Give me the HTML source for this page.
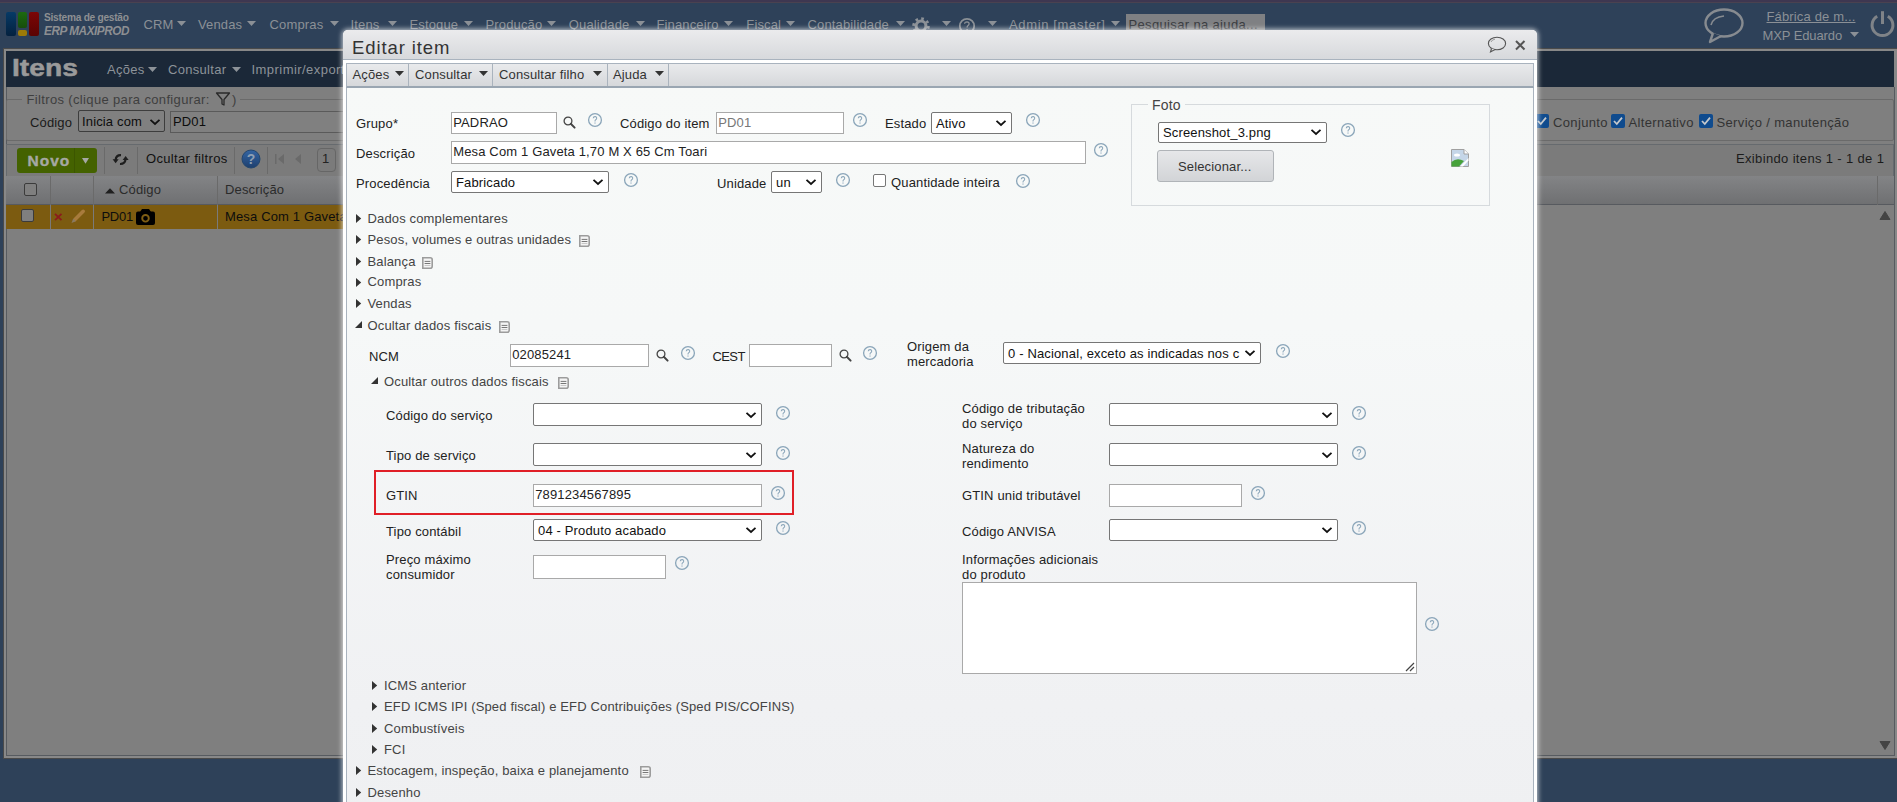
<!DOCTYPE html>
<html><head><meta charset="utf-8"><title>Editar item</title>
<style>
html,body{margin:0;padding:0;}
body{width:1897px;height:802px;overflow:hidden;position:relative;background:#2e4159;font-family:"Liberation Sans", sans-serif;}
.a{position:absolute;white-space:nowrap;}
svg.a{overflow:visible;}
</style></head><body>

<div class="a" style="left:0px;top:0px;width:1897px;height:3px;background:#3e3751;border-bottom:1px solid #4a4250;box-sizing:border-box;"></div>
<div class="a" style="left:6px;top:12px;width:9.5px;height:24px;background:linear-gradient(#063a66,#04213f);border-radius:2px;"></div>
<div class="a" style="left:17.5px;top:12px;width:9.5px;height:15.5px;background:linear-gradient(#1d6a10,#174d0c);border-radius:2px;"></div>
<div class="a" style="left:17.5px;top:29.5px;width:9.5px;height:6.5px;background:#9c7a08;border-radius:2px;"></div>
<div class="a" style="left:29px;top:12px;width:9.5px;height:24px;background:linear-gradient(#7c0606,#5a0303);border-radius:2px;"></div>
<div class="a" style="left:44px;top:9.70px;font-size:11px;line-height:14px;color:#8d8f92;font-weight:bold;letter-spacing:-0.3px;transform:scaleX(0.925);transform-origin:0 0;">Sistema de gestão</div>
<div class="a" style="left:44px;top:21.74px;font-size:13.5px;line-height:17px;color:#8d8f92;font-weight:bold;letter-spacing:-0.5px;font-style:italic;transform:scaleX(0.87);transform-origin:0 0;">ERP MAXIPROD</div>
<div class="a" style="left:143.5px;top:16.73px;font-size:13px;line-height:16px;color:#8b9096;font-weight:normal;letter-spacing:0.15px;">CRM</div>
<div class="a" style="left:198px;top:16.73px;font-size:13px;line-height:16px;color:#8b9096;font-weight:normal;letter-spacing:0.15px;">Vendas</div>
<div class="a" style="left:269.5px;top:16.73px;font-size:13px;line-height:16px;color:#8b9096;font-weight:normal;letter-spacing:0.15px;">Compras</div>
<div class="a" style="left:350.5px;top:16.73px;font-size:13px;line-height:16px;color:#8b9096;font-weight:normal;letter-spacing:0.15px;">Itens</div>
<div class="a" style="left:409.5px;top:16.73px;font-size:13px;line-height:16px;color:#8b9096;font-weight:normal;letter-spacing:0.15px;">Estoque</div>
<div class="a" style="left:485.5px;top:16.73px;font-size:13px;line-height:16px;color:#8b9096;font-weight:normal;letter-spacing:0.15px;">Produção</div>
<div class="a" style="left:568.8px;top:16.73px;font-size:13px;line-height:16px;color:#8b9096;font-weight:normal;letter-spacing:0.15px;">Qualidade</div>
<div class="a" style="left:656.4px;top:16.73px;font-size:13px;line-height:16px;color:#8b9096;font-weight:normal;letter-spacing:0.15px;">Financeiro</div>
<div class="a" style="left:746.3px;top:16.73px;font-size:13px;line-height:16px;color:#8b9096;font-weight:normal;letter-spacing:0.15px;">Fiscal</div>
<div class="a" style="left:807.5px;top:16.73px;font-size:13px;line-height:16px;color:#8b9096;font-weight:normal;letter-spacing:0.15px;">Contabilidade</div>
<svg class="a" style="left:176.5px;top:21px;" width="9" height="5" viewBox="0 0 9 5"><path d="M0 0 H9 L4.5 5 Z" fill="#8b9096"/></svg>
<svg class="a" style="left:247.2px;top:21px;" width="9" height="5" viewBox="0 0 9 5"><path d="M0 0 H9 L4.5 5 Z" fill="#8b9096"/></svg>
<svg class="a" style="left:329.5px;top:21px;" width="9" height="5" viewBox="0 0 9 5"><path d="M0 0 H9 L4.5 5 Z" fill="#8b9096"/></svg>
<svg class="a" style="left:388.1px;top:21px;" width="9" height="5" viewBox="0 0 9 5"><path d="M0 0 H9 L4.5 5 Z" fill="#8b9096"/></svg>
<svg class="a" style="left:463.5px;top:21px;" width="9" height="5" viewBox="0 0 9 5"><path d="M0 0 H9 L4.5 5 Z" fill="#8b9096"/></svg>
<svg class="a" style="left:546.9px;top:21px;" width="9" height="5" viewBox="0 0 9 5"><path d="M0 0 H9 L4.5 5 Z" fill="#8b9096"/></svg>
<svg class="a" style="left:635.5px;top:21px;" width="9" height="5" viewBox="0 0 9 5"><path d="M0 0 H9 L4.5 5 Z" fill="#8b9096"/></svg>
<svg class="a" style="left:724.2px;top:21px;" width="9" height="5" viewBox="0 0 9 5"><path d="M0 0 H9 L4.5 5 Z" fill="#8b9096"/></svg>
<svg class="a" style="left:785.5px;top:21px;" width="9" height="5" viewBox="0 0 9 5"><path d="M0 0 H9 L4.5 5 Z" fill="#8b9096"/></svg>
<svg class="a" style="left:895.5px;top:21px;" width="9" height="5" viewBox="0 0 9 5"><path d="M0 0 H9 L4.5 5 Z" fill="#8b9096"/></svg>
<svg class="a" style="left:941.5px;top:21px;" width="9" height="5" viewBox="0 0 9 5"><path d="M0 0 H9 L4.5 5 Z" fill="#8b9096"/></svg>
<svg class="a" style="left:987.5px;top:21px;" width="9" height="5" viewBox="0 0 9 5"><path d="M0 0 H9 L4.5 5 Z" fill="#8b9096"/></svg>
<svg class="a" style="left:1110.5px;top:21px;" width="9" height="5" viewBox="0 0 9 5"><path d="M0 0 H9 L4.5 5 Z" fill="#8b9096"/></svg>
<svg class="a" style="left:911px;top:15.5px;" width="20" height="20" viewBox="0 0 20 20"><circle cx="10" cy="10" r="7.3" fill="none" stroke="#8b9096" stroke-width="3" stroke-dasharray="2.6 3.13"/><circle cx="10" cy="10" r="4.9" fill="none" stroke="#8b9096" stroke-width="3"/></svg>
<svg class="a" style="left:958px;top:16.5px;" width="18" height="18" viewBox="0 0 18 18"><circle cx="9" cy="9" r="7.2" fill="none" stroke="#8b9096" stroke-width="1.8"/><path d="M6.6 6.8 Q6.7 4.9 9 4.9 Q11.2 5 11.1 6.9 Q11 8 9.8 8.7 Q9.1 9.2 9.1 10.6" fill="none" stroke="#8b9096" stroke-width="1.3"/><rect x="8.4" y="12" width="1.4" height="1.4" fill="#8b9096"/></svg>
<div class="a" style="left:1009px;top:16.73px;font-size:13px;line-height:16px;color:#8b9096;font-weight:normal;letter-spacing:0.65px;">Admin [master]</div>
<div class="a" style="left:1126px;top:14px;width:139px;height:21px;background:#7f8083;"></div>
<div class="a" style="left:1128.5px;top:16.73px;font-size:13px;line-height:16px;color:#383a3e;font-weight:normal;letter-spacing:0.35px;">Pesquisar na ajuda...</div>
<svg class="a" style="left:1704px;top:8px;" width="41" height="36" viewBox="0 0 41 36"><ellipse cx="20" cy="15" rx="18.5" ry="13.5" fill="none" stroke="#878b90" stroke-width="2.4"/><path d="M9 25 L6 34 L17 28" fill="#2e4159" stroke="#878b90" stroke-width="2.4" stroke-linejoin="round"/><path d="M7 17 Q9 9 20 8" fill="none" stroke="#878b90" stroke-width="1.6"/></svg>
<div class="a" style="left:1766.5px;top:8.73px;font-size:13px;line-height:16px;color:#8b9096;font-weight:normal;letter-spacing:0.15px;text-decoration:underline;">Fábrica de m...</div>
<div class="a" style="left:1762.5px;top:27.83px;font-size:13px;line-height:16px;color:#8b9096;font-weight:normal;letter-spacing:-0.1px;">MXP Eduardo</div>
<svg class="a" style="left:1850px;top:32px;" width="9" height="5" viewBox="0 0 9 5"><path d="M0 0 H9 L4.5 5 Z" fill="#8b9096"/></svg>
<svg class="a" style="left:1869px;top:9px;" width="28" height="29" viewBox="0 0 28 29"><path d="M8.2 7.2 A10.4 10.4 0 1 0 18.8 7.2" fill="none" stroke="#7f8388" stroke-width="3"/><path d="M13.5 2.2 V15" stroke="#7f8388" stroke-width="3"/></svg>
<div class="a" style="left:3px;top:48px;width:1897px;height:711px;background:#888;border:1px solid #4a4a4a;box-sizing:border-box;"></div>
<div class="a" style="left:6px;top:87px;width:1889px;height:669px;background:#7f7f7f;border-left:1px solid #575b60;border-right:1px solid #575b60;border-bottom:1px solid #575b60;box-sizing:border-box;"></div>
<div class="a" style="left:6px;top:51px;width:1888px;height:36px;background:#1b2838;"></div>
<div class="a" style="left:12px;top:54.42px;font-size:23.5px;line-height:29px;color:#9a9a9a;font-weight:bold;letter-spacing:0px;transform:scaleX(1.2);transform-origin:0 0;-webkit-text-stroke:0.5px #9a9a9a;">Itens</div>
<div class="a" style="left:107px;top:61.73px;font-size:13px;line-height:16px;color:#8d9399;font-weight:normal;letter-spacing:0.3px;">Ações</div>
<svg class="a" style="left:148px;top:67px;" width="9" height="5" viewBox="0 0 9 5"><path d="M0 0 H9 L4.5 5 Z" fill="#8d9399"/></svg>
<div class="a" style="left:168px;top:61.73px;font-size:13px;line-height:16px;color:#8d9399;font-weight:normal;letter-spacing:0.3px;">Consultar</div>
<svg class="a" style="left:232px;top:67px;" width="9" height="5" viewBox="0 0 9 5"><path d="M0 0 H9 L4.5 5 Z" fill="#8d9399"/></svg>
<div class="a" style="left:251.5px;top:61.73px;font-size:13px;line-height:16px;color:#8d9399;font-weight:normal;letter-spacing:0.45px;">Imprimir/exportar</div>
<div class="a" style="left:6px;top:99px;width:1888px;height:42px;border:1px solid #6a6a6a;border-radius:2px;box-sizing:border-box;"></div>
<div class="a" style="left:22px;top:92px;width:218px;height:14px;background:#7f7f7f;"></div>
<div class="a" style="left:26.5px;top:91.73px;font-size:13px;line-height:16px;color:#3e3e3e;font-weight:normal;letter-spacing:0.35px;">Filtros (clique para configurar:</div>
<svg class="a" style="left:215px;top:91px;" width="16" height="16" viewBox="0 0 16 16"><path d="M1.5 2 H14.5 L9 8.5 V14 L7 13 V8.5 Z" fill="none" stroke="#2a2a2a" stroke-width="1.3" stroke-linejoin="round"/></svg>
<div class="a" style="left:232px;top:91.73px;font-size:13px;line-height:16px;color:#3e3e3e;font-weight:normal;letter-spacing:0.15px;">)</div>
<div class="a" style="left:30px;top:114.53px;font-size:13px;line-height:16px;color:#1a1a1a;font-weight:normal;letter-spacing:0.15px;">Código</div>
<div class="a" style="left:77.5px;top:110.3px;width:87.0px;height:22.200000000000003px;background:#808080;border:1px solid #3d3d3d;border-radius:2px;box-sizing:border-box;"></div>
<div class="a" style="left:82px;top:113.73px;font-size:13px;line-height:16px;color:#0d0d0d;font-weight:normal;letter-spacing:0.15px;">Inicia com</div>
<svg class="a" style="left:148.5px;top:117.5px;" width="12" height="8" viewBox="0 0 12 8"><path d="M1.5 1.8 L6 6 L10.5 1.8" fill="none" stroke="#111" stroke-width="1.8"/></svg>
<div class="a" style="left:170px;top:111px;width:175px;height:22px;background:#808080;border:1px solid #5a5a5a;box-sizing:border-box;"></div>
<div class="a" style="left:173px;top:113.73px;font-size:13px;line-height:16px;color:#0d0d0d;font-weight:normal;letter-spacing:0.15px;">PD01</div>
<div class="a" style="left:1535px;top:114px;width:14px;height:14px;background:#0f4b8e;border-radius:2px;"></div>
<svg class="a" style="left:1535px;top:114px;" width="14" height="14" viewBox="0 0 14 14"><path d="M3 7 L5.8 10 L11 3.6" fill="none" stroke="#c4c8cc" stroke-width="1.8"/></svg>
<div class="a" style="left:1553px;top:114.73px;font-size:13px;line-height:16px;color:#333;font-weight:normal;letter-spacing:0.35px;">Conjunto</div>
<div class="a" style="left:1610.5px;top:114px;width:14.0px;height:14px;background:#0f4b8e;border-radius:2px;"></div>
<svg class="a" style="left:1610.5px;top:114px;" width="14" height="14" viewBox="0 0 14 14"><path d="M3 7 L5.8 10 L11 3.6" fill="none" stroke="#c4c8cc" stroke-width="1.8"/></svg>
<div class="a" style="left:1628.5px;top:114.73px;font-size:13px;line-height:16px;color:#333;font-weight:normal;letter-spacing:0.35px;">Alternativo</div>
<div class="a" style="left:1698.5px;top:114px;width:14.0px;height:14px;background:#0f4b8e;border-radius:2px;"></div>
<svg class="a" style="left:1698.5px;top:114px;" width="14" height="14" viewBox="0 0 14 14"><path d="M3 7 L5.8 10 L11 3.6" fill="none" stroke="#c4c8cc" stroke-width="1.8"/></svg>
<div class="a" style="left:1716.5px;top:114.73px;font-size:13px;line-height:16px;color:#333;font-weight:normal;letter-spacing:0.35px;">Serviço / manutenção</div>
<div class="a" style="left:6px;top:144px;width:1888px;height:33px;background:#7b7b7b;border:1px solid #666a6e;box-sizing:border-box;"></div>
<div class="a" style="left:17px;top:148px;width:80px;height:25px;background:#446200;border-radius:3px;"></div>
<div class="a" style="left:74px;top:148px;width:1px;height:25px;background:#3c5600;"></div>
<div class="a" style="left:27.5px;top:151.38px;font-size:15.5px;line-height:19px;color:#a6a8a4;font-weight:bold;letter-spacing:1.0px;-webkit-text-stroke:0.4px #a6a8a4;">Novo</div>
<svg class="a" style="left:82px;top:158px;" width="7" height="6" viewBox="0 0 7 6"><path d="M0 0 H7 L3.5 5.8 Z" fill="#a6a8a4"/></svg>
<div class="a" style="left:104px;top:147px;width:1px;height:27px;background:#6a6a6a;"></div>
<div class="a" style="left:137px;top:147px;width:1px;height:27px;background:#6a6a6a;"></div>
<div class="a" style="left:234px;top:147px;width:1px;height:27px;background:#6a6a6a;"></div>
<div class="a" style="left:267px;top:147px;width:1px;height:27px;background:#6a6a6a;"></div>
<svg class="a" style="left:112px;top:152px;" width="18" height="15" viewBox="0 0 18 15"><path d="M9 3.2 Q4 3 3.6 8" fill="none" stroke="#1e1e1e" stroke-width="2.2"/><path d="M0.6 7.2 L6.6 7.2 L3.6 11.2 Z" fill="#1e1e1e"/><path d="M8 12 Q13 12.2 13.6 7.2" fill="none" stroke="#1e1e1e" stroke-width="2.2"/><path d="M10.6 8 L16.6 8 L13.6 4 Z" fill="#1e1e1e"/></svg>
<div class="a" style="left:146px;top:150.73px;font-size:13px;line-height:16px;color:#111;font-weight:normal;letter-spacing:0.33px;">Ocultar filtros</div>
<svg class="a" style="left:241px;top:149px;" width="20" height="20" viewBox="0 0 20 20"><defs><linearGradient id="hb" x1="0" y1="0" x2="0" y2="1"><stop offset="0" stop-color="#3565a3"/><stop offset="1" stop-color="#1d3f6e"/></linearGradient></defs><circle cx="10" cy="10" r="9" fill="url(#hb)"/><circle cx="10" cy="10" r="9" fill="none" stroke="#24476f" stroke-width="1"/><text x="10" y="15" font-size="14" font-weight="bold" text-anchor="middle" fill="#8e9fb3" font-family="Liberation Sans">?</text></svg>
<svg class="a" style="left:275px;top:154px;" width="10" height="10" viewBox="0 0 10 10"><rect x="0" y="0" width="1.5" height="10" fill="#6a6a6a"/><path d="M9 0 V10 L3 5 Z" fill="#6a6a6a"/></svg>
<svg class="a" style="left:295px;top:154px;" width="7" height="10" viewBox="0 0 7 10"><path d="M6 0 V10 L0 5 Z" fill="#6a6a6a"/></svg>
<div class="a" style="left:317px;top:148px;width:19px;height:24px;border:1px solid #666;border-radius:4px;box-sizing:border-box;"></div>
<div class="a" style="left:322px;top:151.23px;font-size:13px;line-height:16px;color:#222;font-weight:normal;letter-spacing:0.15px;">1</div>
<div class="a" style="left:1736px;top:150.73px;font-size:13px;line-height:16px;color:#1b1b1b;font-weight:normal;letter-spacing:0.35px;">Exibindo itens 1 - 1 de 1</div>
<div class="a" style="left:6px;top:176px;width:1888px;height:29px;background:linear-gradient(#838486,#6f7072);border-bottom:1px solid #575a5f;box-sizing:border-box;"></div>
<div class="a" style="left:50px;top:176px;width:1px;height:29px;background:#6a6a6a;"></div>
<div class="a" style="left:93px;top:176px;width:1px;height:29px;background:#6a6a6a;"></div>
<div class="a" style="left:217px;top:176px;width:1px;height:29px;background:#6a6a6a;"></div>
<div class="a" style="left:1877px;top:176px;width:1px;height:29px;background:#6a6a6a;"></div>
<div class="a" style="left:24px;top:183px;width:13px;height:13px;background:#7f7f7f;border:1px solid #3b3b3b;border-radius:2px;box-sizing:border-box;"></div>
<svg class="a" style="left:105px;top:188px;" width="10" height="5.5" viewBox="0 0 10 5.5"><path d="M0 5.5 H10 L5 0.3 Z" fill="#1f1f1f"/></svg>
<div class="a" style="left:119px;top:181.73px;font-size:13px;line-height:16px;color:#2b2b2b;font-weight:normal;letter-spacing:0.15px;">Código</div>
<div class="a" style="left:225px;top:181.73px;font-size:13px;line-height:16px;color:#2b2b2b;font-weight:normal;letter-spacing:0.15px;">Descrição</div>
<div class="a" style="left:6px;top:205px;width:339px;height:24px;background:#7c5b10;"></div>
<div class="a" style="left:50px;top:205px;width:1px;height:24px;background:#7a7a7a;"></div>
<div class="a" style="left:93px;top:205px;width:1px;height:24px;background:#7a7a7a;"></div>
<div class="a" style="left:217px;top:205px;width:1px;height:24px;background:#7a7a7a;"></div>
<div class="a" style="left:21px;top:209px;width:13px;height:13px;background:#7f7f7f;border:1px solid #3b3b3b;border-radius:2px;box-sizing:border-box;"></div>
<svg class="a" style="left:54px;top:213px;" width="9" height="8" viewBox="0 0 9 8"><path d="M1 0.8 L7.5 7.2 M7.5 0.8 L1 7.2" stroke="#8a1c1c" stroke-width="1.8"/></svg>
<svg class="a" style="left:70px;top:208px;" width="16" height="16" viewBox="0 0 16 16"><path d="M5 11.5 L13.2 3.3" stroke="#a87b3c" stroke-width="3.6" stroke-linecap="round"/><path d="M1.5 15 L3.2 10.6 L5.9 13.3 Z" fill="#8a7a62"/></svg>
<div class="a" style="left:101.5px;top:208.73px;font-size:13px;line-height:16px;color:#0d0d0d;font-weight:normal;letter-spacing:-0.3px;">PD01</div>
<svg class="a" style="left:136px;top:208px;" width="19" height="18" viewBox="0 0 19 18"><rect x="0" y="3.5" width="19" height="13.5" rx="2" fill="#000"/><path d="M4 4 L6 1 H13 L15 4 Z" fill="#000"/><circle cx="9.5" cy="10.3" r="3.3" fill="none" stroke="#7f5e14" stroke-width="1.9"/></svg>
<div class="a" style="left:225px;top:208.73px;font-size:13px;line-height:16px;color:#0d0d0d;font-weight:normal;letter-spacing:0.15px;">Mesa Com 1 Gaveta</div>
<svg class="a" style="left:1878.5px;top:211px;" width="12" height="9" viewBox="0 0 12 9"><path d="M1 8.5 H11 L6 0.5 Z" fill="#444" stroke="#444" stroke-width="1" stroke-linejoin="round"/></svg>
<svg class="a" style="left:1878.5px;top:741px;" width="12" height="9" viewBox="0 0 12 9"><path d="M1 0.5 H11 L6 8.5 Z" fill="#444" stroke="#444" stroke-width="1" stroke-linejoin="round"/></svg>
<div class="a" style="left:0px;top:759px;width:1897px;height:43px;background:#2e4159;"></div>
<div class="a" style="left:343px;top:30px;width:1194px;height:790px;background:#fff;border-radius:5px 5px 0 0;box-shadow:0 0 5px 1px rgba(255,255,255,0.72);"></div>
<div class="a" style="left:343px;top:30px;width:1194px;height:30px;background:linear-gradient(#ebebed,#d7d9dc);border-radius:5px 5px 0 0;border-bottom:1px solid #a9b3be;box-sizing:border-box;"></div>
<div class="a" style="left:352px;top:36.03px;font-size:18.5px;line-height:23px;color:#333;font-weight:normal;letter-spacing:0.9px;">Editar item</div>
<svg class="a" style="left:1487px;top:36px;" width="20" height="17" viewBox="0 0 20 17"><ellipse cx="10" cy="7.5" rx="8.6" ry="6.3" fill="none" stroke="#555" stroke-width="1.1"/><path d="M4.5 12.5 L3.5 16 L8 13.6" fill="#e0e1e3" stroke="#555" stroke-width="1.1"/><path d="M4 6 Q5 3.5 8 3.2" fill="none" stroke="#888" stroke-width="0.8"/></svg>
<svg class="a" style="left:1514px;top:39px;" width="12" height="12" viewBox="0 0 12 12"><path d="M2 2 L10.5 10.5 M10.5 2 L2 10.5" stroke="#555" stroke-width="2"/></svg>
<div class="a" style="left:346px;top:63px;width:1188px;height:757px;background:linear-gradient(#f7f9f8 0%,#f6f8f8 35%,#f0f1f3 85%,#eff0f2 100%);border:1px solid #a9b3be;box-sizing:border-box;"></div>
<div class="a" style="left:346px;top:63px;width:1188px;height:25px;background:linear-gradient(#e9eaec,#d6d8db);border:1px solid #a9b3be;border-bottom:2px solid #9aa6b2;box-sizing:border-box;"></div>
<div class="a" style="left:352.5px;top:66.73px;font-size:13px;line-height:16px;color:#333;font-weight:normal;letter-spacing:0.15px;">Ações</div>
<svg class="a" style="left:394.5px;top:71px;" width="9" height="5" viewBox="0 0 9 5"><path d="M0 0 H9 L4.5 5 Z" fill="#333"/></svg>
<div class="a" style="left:407.8px;top:64px;width:1.0px;height:22px;background:#aab3bd;"></div>
<div class="a" style="left:415px;top:66.73px;font-size:13px;line-height:16px;color:#333;font-weight:normal;letter-spacing:0.15px;">Consultar</div>
<svg class="a" style="left:479.0px;top:71px;" width="9" height="5" viewBox="0 0 9 5"><path d="M0 0 H9 L4.5 5 Z" fill="#333"/></svg>
<div class="a" style="left:491.6px;top:64px;width:1.0px;height:22px;background:#aab3bd;"></div>
<div class="a" style="left:499px;top:66.73px;font-size:13px;line-height:16px;color:#333;font-weight:normal;letter-spacing:0.15px;">Consultar filho</div>
<svg class="a" style="left:593.3px;top:71px;" width="9" height="5" viewBox="0 0 9 5"><path d="M0 0 H9 L4.5 5 Z" fill="#333"/></svg>
<div class="a" style="left:607.2px;top:64px;width:1.0px;height:22px;background:#aab3bd;"></div>
<div class="a" style="left:613px;top:66.73px;font-size:13px;line-height:16px;color:#333;font-weight:normal;letter-spacing:0.15px;">Ajuda</div>
<svg class="a" style="left:654.5px;top:71px;" width="9" height="5" viewBox="0 0 9 5"><path d="M0 0 H9 L4.5 5 Z" fill="#333"/></svg>
<div class="a" style="left:667.8px;top:64px;width:1.0px;height:22px;background:#aab3bd;"></div>
<div class="a" style="left:356px;top:115.73px;font-size:13px;line-height:16px;color:#222;font-weight:normal;letter-spacing:0.15px;">Grupo*</div>
<div class="a" style="left:451px;top:112px;width:106px;height:22px;background:#fff;border:1px solid #a9a9a9;box-sizing:border-box;"></div>
<div class="a" style="left:453.2px;top:114.63px;font-size:13px;line-height:16px;color:#222;font-weight:normal;letter-spacing:0.15px;">PADRAO</div>
<svg class="a" style="left:561.5px;top:115.3px;" width="14" height="14" viewBox="0 0 14 14"><circle cx="6" cy="6" r="3.9" fill="none" stroke="#444" stroke-width="1.3"/><path d="M8.8 8.8 L12.6 12.6" stroke="#444" stroke-width="2" stroke-linecap="round"/></svg>
<svg class="a" style="left:587px;top:112px;" width="16" height="16" viewBox="0 0 16 16"><circle cx="8" cy="8" r="6.4" fill="none" stroke="#8aa5b9" stroke-width="1.3"/><path d="M6.2 6.2 Q6.3 4.6 8.1 4.6 Q9.8 4.7 9.7 6.2 Q9.6 7.2 8.5 7.9 Q8 8.3 8 9.4" fill="none" stroke="#8aa5b9" stroke-width="1.05"/><rect x="7.45" y="10.5" width="1.1" height="1.1" fill="#8aa5b9"/></svg>
<div class="a" style="left:620px;top:115.73px;font-size:13px;line-height:16px;color:#222;font-weight:normal;letter-spacing:0.15px;">Código do item</div>
<div class="a" style="left:716px;top:112px;width:128px;height:22px;background:#fff;border:1px solid #a9a9a9;box-sizing:border-box;"></div>
<div class="a" style="left:718.2px;top:114.63px;font-size:13px;line-height:16px;color:#777;font-weight:normal;letter-spacing:0.15px;">PD01</div>
<svg class="a" style="left:851.5px;top:112px;" width="16" height="16" viewBox="0 0 16 16"><circle cx="8" cy="8" r="6.4" fill="none" stroke="#8aa5b9" stroke-width="1.3"/><path d="M6.2 6.2 Q6.3 4.6 8.1 4.6 Q9.8 4.7 9.7 6.2 Q9.6 7.2 8.5 7.9 Q8 8.3 8 9.4" fill="none" stroke="#8aa5b9" stroke-width="1.05"/><rect x="7.45" y="10.5" width="1.1" height="1.1" fill="#8aa5b9"/></svg>
<div class="a" style="left:885px;top:115.73px;font-size:13px;line-height:16px;color:#222;font-weight:normal;letter-spacing:0.15px;">Estado</div>
<div class="a" style="left:931px;top:111.5px;width:81px;height:22.0px;background:#fff;border:1px solid #767676;border-radius:2px;box-sizing:border-box;"></div>
<div class="a" style="left:936px;top:115.63px;font-size:13px;line-height:16px;color:#111;font-weight:normal;letter-spacing:0.15px;">Ativo</div>
<svg class="a" style="left:995px;top:118.5px;" width="12" height="8" viewBox="0 0 12 8"><path d="M1.5 1.8 L6 6 L10.5 1.8" fill="none" stroke="#111" stroke-width="1.8"/></svg>
<svg class="a" style="left:1025px;top:112px;" width="16" height="16" viewBox="0 0 16 16"><circle cx="8" cy="8" r="6.4" fill="none" stroke="#8aa5b9" stroke-width="1.3"/><path d="M6.2 6.2 Q6.3 4.6 8.1 4.6 Q9.8 4.7 9.7 6.2 Q9.6 7.2 8.5 7.9 Q8 8.3 8 9.4" fill="none" stroke="#8aa5b9" stroke-width="1.05"/><rect x="7.45" y="10.5" width="1.1" height="1.1" fill="#8aa5b9"/></svg>
<div class="a" style="left:356px;top:145.73px;font-size:13px;line-height:16px;color:#222;font-weight:normal;letter-spacing:0.15px;">Descrição</div>
<div class="a" style="left:451px;top:141px;width:635px;height:22.5px;background:#fff;border:1px solid #a9a9a9;box-sizing:border-box;"></div>
<div class="a" style="left:453.2px;top:143.88px;font-size:13px;line-height:16px;color:#222;font-weight:normal;letter-spacing:0.15px;">Mesa Com 1 Gaveta 1,70 M X 65 Cm Toari</div>
<svg class="a" style="left:1093px;top:142px;" width="16" height="16" viewBox="0 0 16 16"><circle cx="8" cy="8" r="6.4" fill="none" stroke="#8aa5b9" stroke-width="1.3"/><path d="M6.2 6.2 Q6.3 4.6 8.1 4.6 Q9.8 4.7 9.7 6.2 Q9.6 7.2 8.5 7.9 Q8 8.3 8 9.4" fill="none" stroke="#8aa5b9" stroke-width="1.05"/><rect x="7.45" y="10.5" width="1.1" height="1.1" fill="#8aa5b9"/></svg>
<div class="a" style="left:356px;top:175.73px;font-size:13px;line-height:16px;color:#222;font-weight:normal;letter-spacing:0.15px;">Procedência</div>
<div class="a" style="left:451px;top:171px;width:158px;height:22px;background:#fff;border:1px solid #767676;border-radius:2px;box-sizing:border-box;"></div>
<div class="a" style="left:456px;top:175.13px;font-size:13px;line-height:16px;color:#111;font-weight:normal;letter-spacing:0.15px;">Fabricado</div>
<svg class="a" style="left:592px;top:178.0px;" width="12" height="8" viewBox="0 0 12 8"><path d="M1.5 1.8 L6 6 L10.5 1.8" fill="none" stroke="#111" stroke-width="1.8"/></svg>
<svg class="a" style="left:623px;top:172px;" width="16" height="16" viewBox="0 0 16 16"><circle cx="8" cy="8" r="6.4" fill="none" stroke="#8aa5b9" stroke-width="1.3"/><path d="M6.2 6.2 Q6.3 4.6 8.1 4.6 Q9.8 4.7 9.7 6.2 Q9.6 7.2 8.5 7.9 Q8 8.3 8 9.4" fill="none" stroke="#8aa5b9" stroke-width="1.05"/><rect x="7.45" y="10.5" width="1.1" height="1.1" fill="#8aa5b9"/></svg>
<div class="a" style="left:717px;top:175.73px;font-size:13px;line-height:16px;color:#222;font-weight:normal;letter-spacing:0.15px;">Unidade</div>
<div class="a" style="left:771px;top:171px;width:51px;height:22px;background:#fff;border:1px solid #767676;border-radius:2px;box-sizing:border-box;"></div>
<div class="a" style="left:776px;top:175.13px;font-size:13px;line-height:16px;color:#111;font-weight:normal;letter-spacing:0.15px;">un</div>
<svg class="a" style="left:805px;top:178.0px;" width="12" height="8" viewBox="0 0 12 8"><path d="M1.5 1.8 L6 6 L10.5 1.8" fill="none" stroke="#111" stroke-width="1.8"/></svg>
<svg class="a" style="left:835px;top:172px;" width="16" height="16" viewBox="0 0 16 16"><circle cx="8" cy="8" r="6.4" fill="none" stroke="#8aa5b9" stroke-width="1.3"/><path d="M6.2 6.2 Q6.3 4.6 8.1 4.6 Q9.8 4.7 9.7 6.2 Q9.6 7.2 8.5 7.9 Q8 8.3 8 9.4" fill="none" stroke="#8aa5b9" stroke-width="1.05"/><rect x="7.45" y="10.5" width="1.1" height="1.1" fill="#8aa5b9"/></svg>
<div class="a" style="left:873px;top:174px;width:13px;height:13px;background:#fff;border:1px solid #767676;border-radius:2px;box-sizing:border-box;"></div>
<div class="a" style="left:891px;top:174.73px;font-size:13px;line-height:16px;color:#222;font-weight:normal;letter-spacing:0.15px;">Quantidade inteira</div>
<svg class="a" style="left:1015px;top:173px;" width="16" height="16" viewBox="0 0 16 16"><circle cx="8" cy="8" r="6.4" fill="none" stroke="#8aa5b9" stroke-width="1.3"/><path d="M6.2 6.2 Q6.3 4.6 8.1 4.6 Q9.8 4.7 9.7 6.2 Q9.6 7.2 8.5 7.9 Q8 8.3 8 9.4" fill="none" stroke="#8aa5b9" stroke-width="1.05"/><rect x="7.45" y="10.5" width="1.1" height="1.1" fill="#8aa5b9"/></svg>
<div class="a" style="left:1131px;top:104px;width:359px;height:102px;border:1px solid #d6dadd;box-sizing:border-box;"></div>
<div class="a" style="left:1148px;top:96px;width:37px;height:14px;background:#f7f9f8;"></div>
<div class="a" style="left:1152px;top:96.25px;font-size:14px;line-height:18px;color:#444;font-weight:normal;letter-spacing:0.2px;">Foto</div>
<div class="a" style="left:1158px;top:121.5px;width:169px;height:21.5px;background:#fff;border:1px solid #767676;border-radius:2px;box-sizing:border-box;"></div>
<div class="a" style="left:1163px;top:125.38px;font-size:13px;line-height:16px;color:#111;font-weight:normal;letter-spacing:0.15px;">Screenshot_3.png</div>
<svg class="a" style="left:1310px;top:128.25px;" width="12" height="8" viewBox="0 0 12 8"><path d="M1.5 1.8 L6 6 L10.5 1.8" fill="none" stroke="#111" stroke-width="1.8"/></svg>
<svg class="a" style="left:1340px;top:122px;" width="16" height="16" viewBox="0 0 16 16"><circle cx="8" cy="8" r="6.4" fill="none" stroke="#8aa5b9" stroke-width="1.3"/><path d="M6.2 6.2 Q6.3 4.6 8.1 4.6 Q9.8 4.7 9.7 6.2 Q9.6 7.2 8.5 7.9 Q8 8.3 8 9.4" fill="none" stroke="#8aa5b9" stroke-width="1.05"/><rect x="7.45" y="10.5" width="1.1" height="1.1" fill="#8aa5b9"/></svg>
<div class="a" style="left:1157px;top:150px;width:117px;height:32px;background:linear-gradient(#e6e7e9,#d2d4d7);border:1px solid #b0b4b8;border-radius:3px;box-sizing:border-box;"></div>
<div class="a" style="left:1178px;top:159.23px;font-size:13px;line-height:16px;color:#333;font-weight:normal;letter-spacing:0.15px;">Selecionar...</div>
<svg class="a" style="left:1451px;top:149px;" width="18" height="18" viewBox="0 0 18 18"><path d="M0.5 0.5 H13 L17.5 5 V17.5 H0.5 Z" fill="#c5d6e8" stroke="#a0a0a0" stroke-width="1"/><path d="M13 0.5 V5 H17.5" fill="#fff" stroke="#a0a0a0" stroke-width="1"/><ellipse cx="6" cy="6" rx="3" ry="1.6" fill="#fff"/><path d="M0.5 17.5 V13 Q6 8 13 12 L8 17.5 Z" fill="#46a23a"/><path d="M9 17.5 L17.5 9 V11.5 L12 17.5 Z" fill="#fff"/></svg>
<svg class="a" style="left:355.5px;top:214.0px;" width="6" height="9" viewBox="0 0 6 9"><path d="M0 0 L5.2 4.5 L0 9 Z" fill="#333"/></svg>
<div class="a" style="left:367.5px;top:210.73px;font-size:13px;line-height:16px;color:#444;font-weight:normal;letter-spacing:0.15px;">Dados complementares</div>
<svg class="a" style="left:355.5px;top:235.0px;" width="6" height="9" viewBox="0 0 6 9"><path d="M0 0 L5.2 4.5 L0 9 Z" fill="#333"/></svg>
<div class="a" style="left:367.5px;top:231.73px;font-size:13px;line-height:16px;color:#444;font-weight:normal;letter-spacing:0.15px;">Pesos, volumes e outras unidades</div>
<svg class="a" style="left:579px;top:234.5px;" width="11" height="12" viewBox="0 0 11 12"><path d="M0.8 0.8 H8.2 Q10.2 0.8 10.2 2.8 V9.2 Q10.2 11.2 8.2 11.2 H0.8 Z" fill="#f4f4f4" stroke="#9c9c9c" stroke-width="1.6"/><path d="M2.6 4.4 H8.4 M2.6 6.5 H8.4" stroke="#777" stroke-width="1"/><path d="M2.6 8.5 H8.4" stroke="#c8c8c8" stroke-width="1"/></svg>
<svg class="a" style="left:355.5px;top:257.1px;" width="6" height="9" viewBox="0 0 6 9"><path d="M0 0 L5.2 4.5 L0 9 Z" fill="#333"/></svg>
<div class="a" style="left:367.5px;top:253.83px;font-size:13px;line-height:16px;color:#444;font-weight:normal;letter-spacing:0.15px;">Balança</div>
<svg class="a" style="left:422px;top:256.6px;" width="11" height="12" viewBox="0 0 11 12"><path d="M0.8 0.8 H8.2 Q10.2 0.8 10.2 2.8 V9.2 Q10.2 11.2 8.2 11.2 H0.8 Z" fill="#f4f4f4" stroke="#9c9c9c" stroke-width="1.6"/><path d="M2.6 4.4 H8.4 M2.6 6.5 H8.4" stroke="#777" stroke-width="1"/><path d="M2.6 8.5 H8.4" stroke="#c8c8c8" stroke-width="1"/></svg>
<svg class="a" style="left:355.5px;top:277.5px;" width="6" height="9" viewBox="0 0 6 9"><path d="M0 0 L5.2 4.5 L0 9 Z" fill="#333"/></svg>
<div class="a" style="left:367.5px;top:274.23px;font-size:13px;line-height:16px;color:#444;font-weight:normal;letter-spacing:0.15px;">Compras</div>
<svg class="a" style="left:355.5px;top:299.0px;" width="6" height="9" viewBox="0 0 6 9"><path d="M0 0 L5.2 4.5 L0 9 Z" fill="#333"/></svg>
<div class="a" style="left:367.5px;top:295.73px;font-size:13px;line-height:16px;color:#444;font-weight:normal;letter-spacing:0.15px;">Vendas</div>
<svg class="a" style="left:354.7px;top:321.3px;" width="7" height="7" viewBox="0 0 7 7"><path d="M7 0 L7 7 L0 7 Z" fill="#333"/></svg>
<div class="a" style="left:367.5px;top:317.73px;font-size:13px;line-height:16px;color:#444;font-weight:normal;letter-spacing:0.15px;">Ocultar dados fiscais</div>
<svg class="a" style="left:499px;top:320.5px;" width="11" height="12" viewBox="0 0 11 12"><path d="M0.8 0.8 H8.2 Q10.2 0.8 10.2 2.8 V9.2 Q10.2 11.2 8.2 11.2 H0.8 Z" fill="#f4f4f4" stroke="#9c9c9c" stroke-width="1.6"/><path d="M2.6 4.4 H8.4 M2.6 6.5 H8.4" stroke="#777" stroke-width="1"/><path d="M2.6 8.5 H8.4" stroke="#c8c8c8" stroke-width="1"/></svg>
<div class="a" style="left:369px;top:349.03px;font-size:13px;line-height:16px;color:#222;font-weight:normal;letter-spacing:0.15px;">NCM</div>
<div class="a" style="left:510px;top:344px;width:139px;height:22.5px;background:#fff;border:1px solid #a9a9a9;box-sizing:border-box;"></div>
<div class="a" style="left:512.2px;top:346.88px;font-size:13px;line-height:16px;color:#222;font-weight:normal;letter-spacing:0.15px;">02085241</div>
<svg class="a" style="left:655px;top:347.5px;" width="14" height="14" viewBox="0 0 14 14"><circle cx="6" cy="6" r="3.9" fill="none" stroke="#444" stroke-width="1.3"/><path d="M8.8 8.8 L12.6 12.6" stroke="#444" stroke-width="2" stroke-linecap="round"/></svg>
<svg class="a" style="left:680px;top:345px;" width="16" height="16" viewBox="0 0 16 16"><circle cx="8" cy="8" r="6.4" fill="none" stroke="#8aa5b9" stroke-width="1.3"/><path d="M6.2 6.2 Q6.3 4.6 8.1 4.6 Q9.8 4.7 9.7 6.2 Q9.6 7.2 8.5 7.9 Q8 8.3 8 9.4" fill="none" stroke="#8aa5b9" stroke-width="1.05"/><rect x="7.45" y="10.5" width="1.1" height="1.1" fill="#8aa5b9"/></svg>
<div class="a" style="left:712.5px;top:349.23px;font-size:13px;line-height:16px;color:#222;font-weight:normal;letter-spacing:-0.6px;">CEST</div>
<div class="a" style="left:749px;top:344px;width:83px;height:22.5px;background:#fff;border:1px solid #a9a9a9;box-sizing:border-box;"></div>
<svg class="a" style="left:838px;top:347.5px;" width="14" height="14" viewBox="0 0 14 14"><circle cx="6" cy="6" r="3.9" fill="none" stroke="#444" stroke-width="1.3"/><path d="M8.8 8.8 L12.6 12.6" stroke="#444" stroke-width="2" stroke-linecap="round"/></svg>
<svg class="a" style="left:861.8px;top:345px;" width="16" height="16" viewBox="0 0 16 16"><circle cx="8" cy="8" r="6.4" fill="none" stroke="#8aa5b9" stroke-width="1.3"/><path d="M6.2 6.2 Q6.3 4.6 8.1 4.6 Q9.8 4.7 9.7 6.2 Q9.6 7.2 8.5 7.9 Q8 8.3 8 9.4" fill="none" stroke="#8aa5b9" stroke-width="1.05"/><rect x="7.45" y="10.5" width="1.1" height="1.1" fill="#8aa5b9"/></svg>
<div class="a" style="left:907px;top:338.73px;font-size:13px;line-height:16px;color:#222;font-weight:normal;letter-spacing:0.15px;">Origem da</div>
<div class="a" style="left:907px;top:353.73px;font-size:13px;line-height:16px;color:#222;font-weight:normal;letter-spacing:0.15px;">mercadoria</div>
<div class="a" style="left:1003px;top:342px;width:258px;height:22px;background:#fff;border:1px solid #767676;border-radius:2px;box-sizing:border-box;"></div>
<div class="a" style="left:1008px;top:346.13px;font-size:13px;line-height:16px;color:#111;font-weight:normal;letter-spacing:0.15px;">0 - Nacional, exceto as indicadas nos c</div>
<svg class="a" style="left:1244px;top:349.0px;" width="12" height="8" viewBox="0 0 12 8"><path d="M1.5 1.8 L6 6 L10.5 1.8" fill="none" stroke="#111" stroke-width="1.8"/></svg>
<svg class="a" style="left:1274.8px;top:343px;" width="16" height="16" viewBox="0 0 16 16"><circle cx="8" cy="8" r="6.4" fill="none" stroke="#8aa5b9" stroke-width="1.3"/><path d="M6.2 6.2 Q6.3 4.6 8.1 4.6 Q9.8 4.7 9.7 6.2 Q9.6 7.2 8.5 7.9 Q8 8.3 8 9.4" fill="none" stroke="#8aa5b9" stroke-width="1.05"/><rect x="7.45" y="10.5" width="1.1" height="1.1" fill="#8aa5b9"/></svg>
<svg class="a" style="left:371.2px;top:377.3px;" width="7" height="7" viewBox="0 0 7 7"><path d="M7 0 L7 7 L0 7 Z" fill="#333"/></svg>
<div class="a" style="left:384px;top:373.73px;font-size:13px;line-height:16px;color:#444;font-weight:normal;letter-spacing:0.15px;">Ocultar outros dados fiscais</div>
<svg class="a" style="left:558px;top:376.5px;" width="11" height="12" viewBox="0 0 11 12"><path d="M0.8 0.8 H8.2 Q10.2 0.8 10.2 2.8 V9.2 Q10.2 11.2 8.2 11.2 H0.8 Z" fill="#f4f4f4" stroke="#9c9c9c" stroke-width="1.6"/><path d="M2.6 4.4 H8.4 M2.6 6.5 H8.4" stroke="#777" stroke-width="1"/><path d="M2.6 8.5 H8.4" stroke="#c8c8c8" stroke-width="1"/></svg>
<div class="a" style="left:386px;top:407.73px;font-size:13px;line-height:16px;color:#222;font-weight:normal;letter-spacing:0.15px;">Código do serviço</div>
<div class="a" style="left:533px;top:403px;width:229px;height:23px;background:#fff;border:1px solid #767676;border-radius:2px;box-sizing:border-box;"></div>
<svg class="a" style="left:745px;top:410.5px;" width="12" height="8" viewBox="0 0 12 8"><path d="M1.5 1.8 L6 6 L10.5 1.8" fill="none" stroke="#111" stroke-width="1.8"/></svg>
<svg class="a" style="left:775px;top:404.5px;" width="16" height="16" viewBox="0 0 16 16"><circle cx="8" cy="8" r="6.4" fill="none" stroke="#8aa5b9" stroke-width="1.3"/><path d="M6.2 6.2 Q6.3 4.6 8.1 4.6 Q9.8 4.7 9.7 6.2 Q9.6 7.2 8.5 7.9 Q8 8.3 8 9.4" fill="none" stroke="#8aa5b9" stroke-width="1.05"/><rect x="7.45" y="10.5" width="1.1" height="1.1" fill="#8aa5b9"/></svg>
<div class="a" style="left:386px;top:447.73px;font-size:13px;line-height:16px;color:#222;font-weight:normal;letter-spacing:0.15px;">Tipo de serviço</div>
<div class="a" style="left:533px;top:443px;width:229px;height:23px;background:#fff;border:1px solid #767676;border-radius:2px;box-sizing:border-box;"></div>
<svg class="a" style="left:745px;top:450.5px;" width="12" height="8" viewBox="0 0 12 8"><path d="M1.5 1.8 L6 6 L10.5 1.8" fill="none" stroke="#111" stroke-width="1.8"/></svg>
<svg class="a" style="left:775px;top:444.5px;" width="16" height="16" viewBox="0 0 16 16"><circle cx="8" cy="8" r="6.4" fill="none" stroke="#8aa5b9" stroke-width="1.3"/><path d="M6.2 6.2 Q6.3 4.6 8.1 4.6 Q9.8 4.7 9.7 6.2 Q9.6 7.2 8.5 7.9 Q8 8.3 8 9.4" fill="none" stroke="#8aa5b9" stroke-width="1.05"/><rect x="7.45" y="10.5" width="1.1" height="1.1" fill="#8aa5b9"/></svg>
<div class="a" style="left:374px;top:470px;width:420px;height:44.5px;border:2px solid #e01f27;box-sizing:border-box;"></div>
<div class="a" style="left:386px;top:487.73px;font-size:13px;line-height:16px;color:#222;font-weight:normal;letter-spacing:0.15px;">GTIN</div>
<div class="a" style="left:533px;top:484px;width:229px;height:23px;background:#fff;border:1px solid #a9a9a9;box-sizing:border-box;"></div>
<div class="a" style="left:535.2px;top:487.13px;font-size:13px;line-height:16px;color:#222;font-weight:normal;letter-spacing:0.15px;">7891234567895</div>
<svg class="a" style="left:770px;top:484.5px;" width="16" height="16" viewBox="0 0 16 16"><circle cx="8" cy="8" r="6.4" fill="none" stroke="#8aa5b9" stroke-width="1.3"/><path d="M6.2 6.2 Q6.3 4.6 8.1 4.6 Q9.8 4.7 9.7 6.2 Q9.6 7.2 8.5 7.9 Q8 8.3 8 9.4" fill="none" stroke="#8aa5b9" stroke-width="1.05"/><rect x="7.45" y="10.5" width="1.1" height="1.1" fill="#8aa5b9"/></svg>
<div class="a" style="left:386px;top:523.73px;font-size:13px;line-height:16px;color:#222;font-weight:normal;letter-spacing:0.15px;">Tipo contábil</div>
<div class="a" style="left:533px;top:519.3px;width:229px;height:21.5px;background:#fff;border:1px solid #767676;border-radius:2px;box-sizing:border-box;"></div>
<div class="a" style="left:538px;top:523.18px;font-size:13px;line-height:16px;color:#111;font-weight:normal;letter-spacing:0.15px;">04 - Produto acabado</div>
<svg class="a" style="left:745px;top:526.05px;" width="12" height="8" viewBox="0 0 12 8"><path d="M1.5 1.8 L6 6 L10.5 1.8" fill="none" stroke="#111" stroke-width="1.8"/></svg>
<svg class="a" style="left:775px;top:520px;" width="16" height="16" viewBox="0 0 16 16"><circle cx="8" cy="8" r="6.4" fill="none" stroke="#8aa5b9" stroke-width="1.3"/><path d="M6.2 6.2 Q6.3 4.6 8.1 4.6 Q9.8 4.7 9.7 6.2 Q9.6 7.2 8.5 7.9 Q8 8.3 8 9.4" fill="none" stroke="#8aa5b9" stroke-width="1.05"/><rect x="7.45" y="10.5" width="1.1" height="1.1" fill="#8aa5b9"/></svg>
<div class="a" style="left:386px;top:551.73px;font-size:13px;line-height:16px;color:#222;font-weight:normal;letter-spacing:0.15px;">Preço máximo</div>
<div class="a" style="left:386px;top:566.73px;font-size:13px;line-height:16px;color:#222;font-weight:normal;letter-spacing:0.15px;">consumidor</div>
<div class="a" style="left:533px;top:555px;width:133px;height:23.5px;background:#fff;border:1px solid #a9a9a9;box-sizing:border-box;"></div>
<svg class="a" style="left:674px;top:555px;" width="16" height="16" viewBox="0 0 16 16"><circle cx="8" cy="8" r="6.4" fill="none" stroke="#8aa5b9" stroke-width="1.3"/><path d="M6.2 6.2 Q6.3 4.6 8.1 4.6 Q9.8 4.7 9.7 6.2 Q9.6 7.2 8.5 7.9 Q8 8.3 8 9.4" fill="none" stroke="#8aa5b9" stroke-width="1.05"/><rect x="7.45" y="10.5" width="1.1" height="1.1" fill="#8aa5b9"/></svg>
<div class="a" style="left:962px;top:400.73px;font-size:13px;line-height:16px;color:#222;font-weight:normal;letter-spacing:0.15px;">Código de tributação</div>
<div class="a" style="left:962px;top:415.73px;font-size:13px;line-height:16px;color:#222;font-weight:normal;letter-spacing:0.15px;">do serviço</div>
<div class="a" style="left:1109px;top:403px;width:229px;height:23px;background:#fff;border:1px solid #767676;border-radius:2px;box-sizing:border-box;"></div>
<svg class="a" style="left:1321px;top:410.5px;" width="12" height="8" viewBox="0 0 12 8"><path d="M1.5 1.8 L6 6 L10.5 1.8" fill="none" stroke="#111" stroke-width="1.8"/></svg>
<svg class="a" style="left:1351px;top:404.5px;" width="16" height="16" viewBox="0 0 16 16"><circle cx="8" cy="8" r="6.4" fill="none" stroke="#8aa5b9" stroke-width="1.3"/><path d="M6.2 6.2 Q6.3 4.6 8.1 4.6 Q9.8 4.7 9.7 6.2 Q9.6 7.2 8.5 7.9 Q8 8.3 8 9.4" fill="none" stroke="#8aa5b9" stroke-width="1.05"/><rect x="7.45" y="10.5" width="1.1" height="1.1" fill="#8aa5b9"/></svg>
<div class="a" style="left:962px;top:440.73px;font-size:13px;line-height:16px;color:#222;font-weight:normal;letter-spacing:0.15px;">Natureza do</div>
<div class="a" style="left:962px;top:455.73px;font-size:13px;line-height:16px;color:#222;font-weight:normal;letter-spacing:0.15px;">rendimento</div>
<div class="a" style="left:1109px;top:443px;width:229px;height:23px;background:#fff;border:1px solid #767676;border-radius:2px;box-sizing:border-box;"></div>
<svg class="a" style="left:1321px;top:450.5px;" width="12" height="8" viewBox="0 0 12 8"><path d="M1.5 1.8 L6 6 L10.5 1.8" fill="none" stroke="#111" stroke-width="1.8"/></svg>
<svg class="a" style="left:1351px;top:445px;" width="16" height="16" viewBox="0 0 16 16"><circle cx="8" cy="8" r="6.4" fill="none" stroke="#8aa5b9" stroke-width="1.3"/><path d="M6.2 6.2 Q6.3 4.6 8.1 4.6 Q9.8 4.7 9.7 6.2 Q9.6 7.2 8.5 7.9 Q8 8.3 8 9.4" fill="none" stroke="#8aa5b9" stroke-width="1.05"/><rect x="7.45" y="10.5" width="1.1" height="1.1" fill="#8aa5b9"/></svg>
<div class="a" style="left:962px;top:487.73px;font-size:13px;line-height:16px;color:#222;font-weight:normal;letter-spacing:0.15px;">GTIN unid tributável</div>
<div class="a" style="left:1109px;top:484px;width:133px;height:23px;background:#fff;border:1px solid #a9a9a9;box-sizing:border-box;"></div>
<svg class="a" style="left:1250px;top:484.5px;" width="16" height="16" viewBox="0 0 16 16"><circle cx="8" cy="8" r="6.4" fill="none" stroke="#8aa5b9" stroke-width="1.3"/><path d="M6.2 6.2 Q6.3 4.6 8.1 4.6 Q9.8 4.7 9.7 6.2 Q9.6 7.2 8.5 7.9 Q8 8.3 8 9.4" fill="none" stroke="#8aa5b9" stroke-width="1.05"/><rect x="7.45" y="10.5" width="1.1" height="1.1" fill="#8aa5b9"/></svg>
<div class="a" style="left:962px;top:523.73px;font-size:13px;line-height:16px;color:#222;font-weight:normal;letter-spacing:0.15px;">Código ANVISA</div>
<div class="a" style="left:1109px;top:519.3px;width:229px;height:21.5px;background:#fff;border:1px solid #767676;border-radius:2px;box-sizing:border-box;"></div>
<svg class="a" style="left:1321px;top:526.05px;" width="12" height="8" viewBox="0 0 12 8"><path d="M1.5 1.8 L6 6 L10.5 1.8" fill="none" stroke="#111" stroke-width="1.8"/></svg>
<svg class="a" style="left:1351px;top:520px;" width="16" height="16" viewBox="0 0 16 16"><circle cx="8" cy="8" r="6.4" fill="none" stroke="#8aa5b9" stroke-width="1.3"/><path d="M6.2 6.2 Q6.3 4.6 8.1 4.6 Q9.8 4.7 9.7 6.2 Q9.6 7.2 8.5 7.9 Q8 8.3 8 9.4" fill="none" stroke="#8aa5b9" stroke-width="1.05"/><rect x="7.45" y="10.5" width="1.1" height="1.1" fill="#8aa5b9"/></svg>
<div class="a" style="left:962px;top:551.73px;font-size:13px;line-height:16px;color:#222;font-weight:normal;letter-spacing:0.15px;">Informações adicionais</div>
<div class="a" style="left:962px;top:566.73px;font-size:13px;line-height:16px;color:#222;font-weight:normal;letter-spacing:0.15px;">do produto</div>
<div class="a" style="left:962px;top:582px;width:455px;height:92px;background:#fff;border:1px solid #a9a9a9;box-sizing:border-box;"></div>
<svg class="a" style="left:1404px;top:661px;" width="11" height="11" viewBox="0 0 11 11"><path d="M2 10 L10 2 M6 10 L10 6" stroke="#444" stroke-width="1.2"/></svg>
<svg class="a" style="left:1424px;top:616px;" width="16" height="16" viewBox="0 0 16 16"><circle cx="8" cy="8" r="6.4" fill="none" stroke="#8aa5b9" stroke-width="1.3"/><path d="M6.2 6.2 Q6.3 4.6 8.1 4.6 Q9.8 4.7 9.7 6.2 Q9.6 7.2 8.5 7.9 Q8 8.3 8 9.4" fill="none" stroke="#8aa5b9" stroke-width="1.05"/><rect x="7.45" y="10.5" width="1.1" height="1.1" fill="#8aa5b9"/></svg>
<svg class="a" style="left:372px;top:681.0px;" width="6" height="9" viewBox="0 0 6 9"><path d="M0 0 L5.2 4.5 L0 9 Z" fill="#333"/></svg>
<div class="a" style="left:384px;top:677.73px;font-size:13px;line-height:16px;color:#444;font-weight:normal;letter-spacing:0.15px;">ICMS anterior</div>
<svg class="a" style="left:372px;top:702.0px;" width="6" height="9" viewBox="0 0 6 9"><path d="M0 0 L5.2 4.5 L0 9 Z" fill="#333"/></svg>
<div class="a" style="left:384px;top:698.73px;font-size:13px;line-height:16px;color:#444;font-weight:normal;letter-spacing:0.15px;">EFD ICMS IPI (Sped fiscal) e EFD Contribuições (Sped PIS/COFINS)</div>
<svg class="a" style="left:372px;top:724.0px;" width="6" height="9" viewBox="0 0 6 9"><path d="M0 0 L5.2 4.5 L0 9 Z" fill="#333"/></svg>
<div class="a" style="left:384px;top:720.73px;font-size:13px;line-height:16px;color:#444;font-weight:normal;letter-spacing:0.15px;">Combustíveis</div>
<svg class="a" style="left:372px;top:745.0px;" width="6" height="9" viewBox="0 0 6 9"><path d="M0 0 L5.2 4.5 L0 9 Z" fill="#333"/></svg>
<div class="a" style="left:384px;top:741.73px;font-size:13px;line-height:16px;color:#444;font-weight:normal;letter-spacing:0.15px;">FCI</div>
<svg class="a" style="left:355.5px;top:766.0px;" width="6" height="9" viewBox="0 0 6 9"><path d="M0 0 L5.2 4.5 L0 9 Z" fill="#333"/></svg>
<div class="a" style="left:367.5px;top:762.73px;font-size:13px;line-height:16px;color:#444;font-weight:normal;letter-spacing:0.15px;">Estocagem, inspeção, baixa e planejamento</div>
<svg class="a" style="left:640px;top:765.5px;" width="11" height="12" viewBox="0 0 11 12"><path d="M0.8 0.8 H8.2 Q10.2 0.8 10.2 2.8 V9.2 Q10.2 11.2 8.2 11.2 H0.8 Z" fill="#f4f4f4" stroke="#9c9c9c" stroke-width="1.6"/><path d="M2.6 4.4 H8.4 M2.6 6.5 H8.4" stroke="#777" stroke-width="1"/><path d="M2.6 8.5 H8.4" stroke="#c8c8c8" stroke-width="1"/></svg>
<svg class="a" style="left:355.5px;top:788.0px;" width="6" height="9" viewBox="0 0 6 9"><path d="M0 0 L5.2 4.5 L0 9 Z" fill="#333"/></svg>
<div class="a" style="left:367.5px;top:784.73px;font-size:13px;line-height:16px;color:#444;font-weight:normal;letter-spacing:0.15px;">Desenho</div>
</body></html>
